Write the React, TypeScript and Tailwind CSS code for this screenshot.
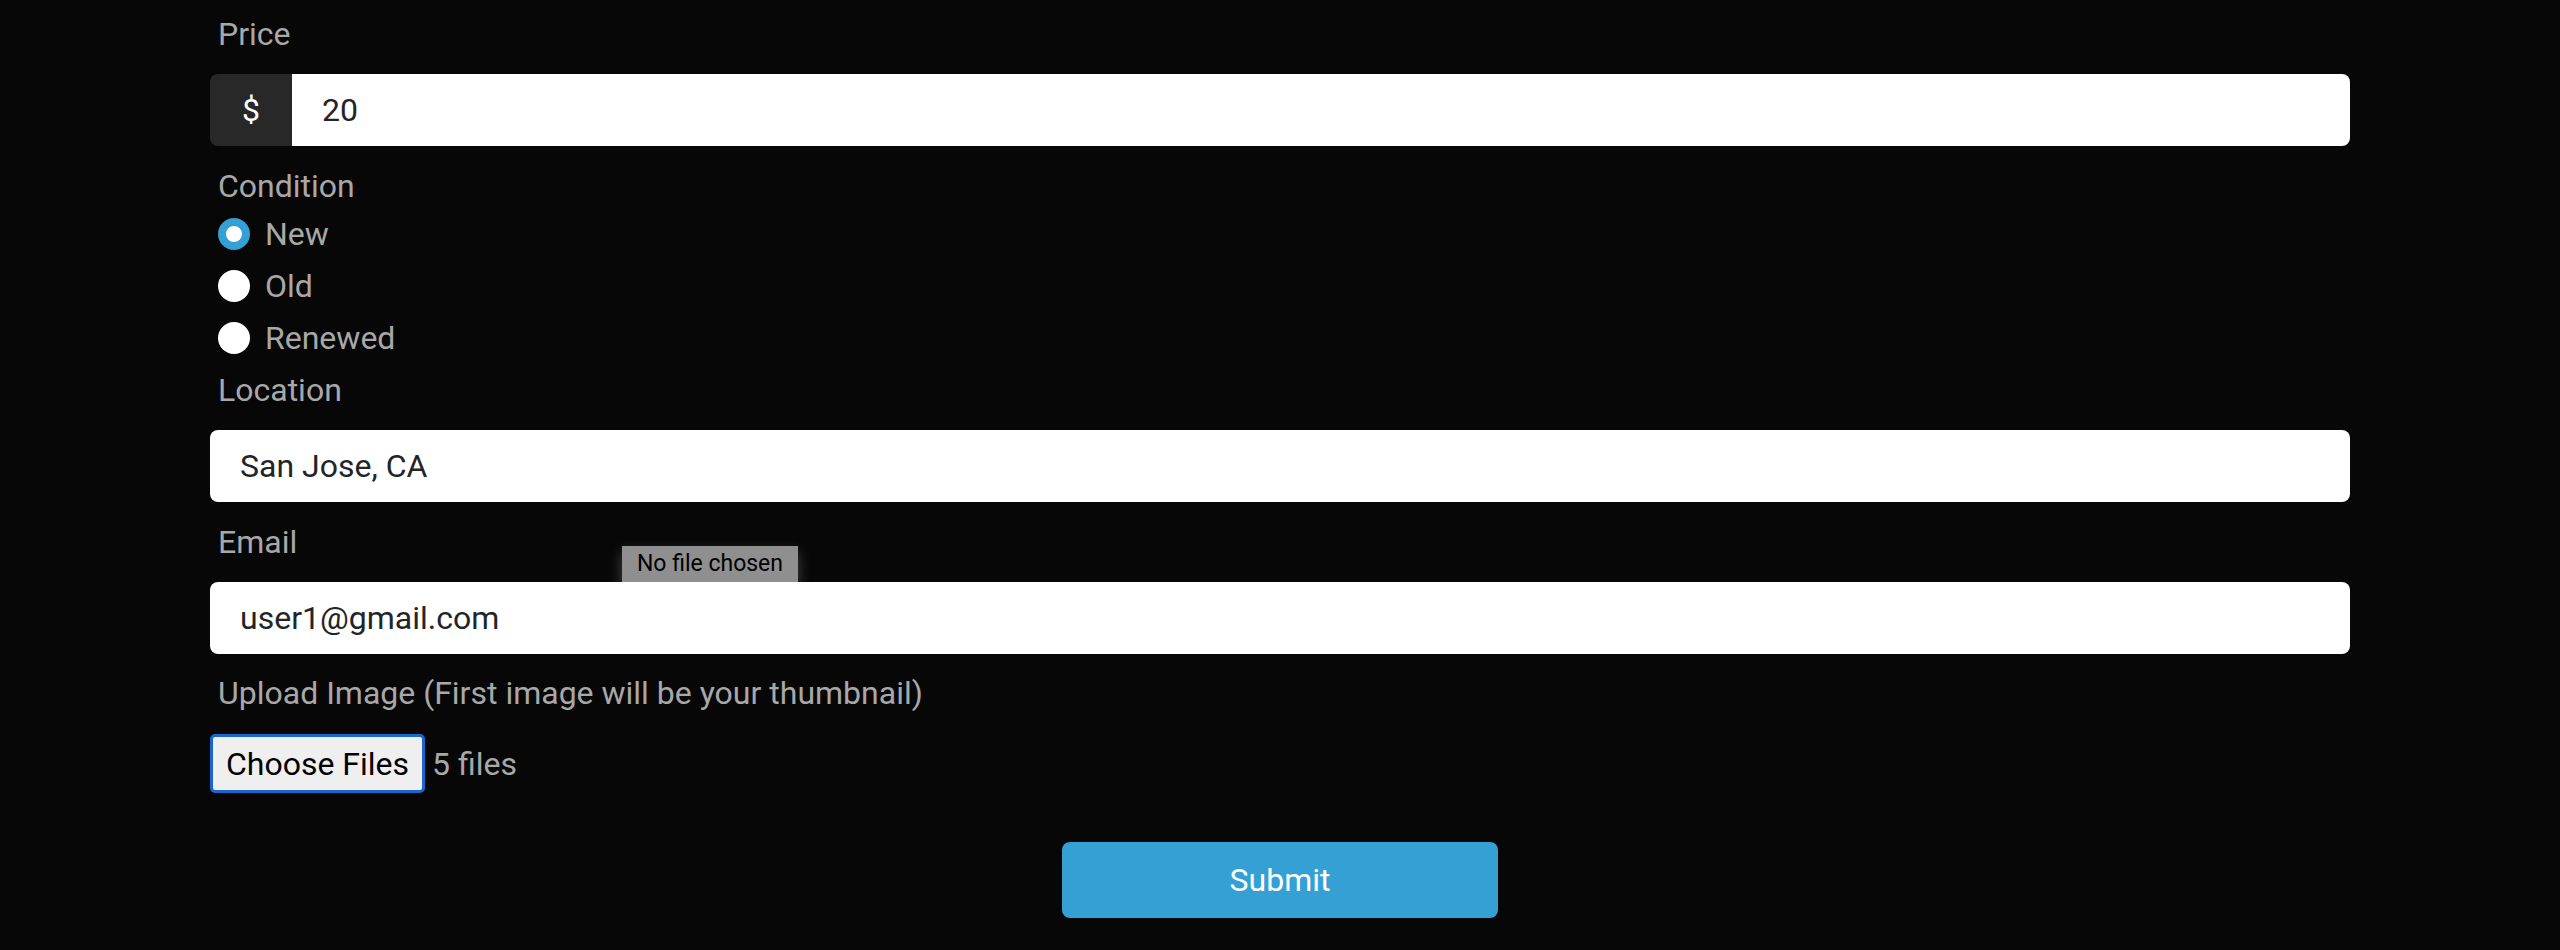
import React from 'react';

const font = { fontFamily: 'Roboto, "Noto Sans", sans-serif' };

function Label({ children, className = '' }: { children: React.ReactNode; className?: string }) {
    return (
        <label className={`block pl-[8px] text-[32px] leading-[48px] text-[#a8a8a8] ${className}`}>{children}</label>
    );
}

function Radio({ label, checked }: { label: string; checked?: boolean }) {
    return (
        <div className="flex items-center h-[48px] mb-[4px] pl-[8px]">
            {checked ? (
                <span className="w-[32px] h-[32px] rounded-full border-[8px] border-[#33a0d6] bg-white" />
            ) : (
                <span className="w-[32px] h-[32px] rounded-full bg-white" />
            )}
            <span className="ml-[15px] text-[32px] leading-[48px] text-[#a8a8a8]">{label}</span>
        </div>
    );
}

export default function App() {
    return (
        <div className="min-h-[950px] w-full bg-[#070707]" style={font}>
            <div className="relative mx-auto w-[2140px] pt-[10px]">
                {/* --- PRICE --- */}
                <Label className="mb-[16px]">Price</Label>
                <div className="flex h-[72px]">
                    <div className="w-[82px] flex items-center justify-center bg-[#282828] rounded-l-[8px] text-white text-[32px]">$</div>
                    <div className="flex-1 flex items-center bg-white rounded-r-[8px] pl-[30px] text-[32px] text-[#212529]">20</div>
                </div>

                {/* --- CONDITION --- */}
                <Label className="mt-[16px]">Condition</Label>
                <Radio label="New" checked />
                <Radio label="Old" />
                <Radio label="Renewed" />

                {/* --- LOCATION / EMAIL --- */}
                <Label className="mb-[16px]">Location</Label>
                <div className="h-[72px] flex items-center bg-white rounded-[8px] pl-[30px] text-[32px] text-[#212529]">San Jose, CA</div>

                <Label className="mt-[16px] mb-[16px]">Email</Label>
                <div className="h-[72px] flex items-center bg-white rounded-[8px] pl-[30px] text-[32px] text-[#212529]">user1@gmail.com</div>

                {/* --- UPLOAD --- */}
                <Label className="mt-[15px]">Upload Image (First image will be your thumbnail)</Label>
                <div className="flex items-center mt-[17px]">
                    <button className="h-[59px] w-[215px] flex items-center justify-center border-[3px] border-[#1766d1] rounded-[5px] bg-[#efefef] text-black text-[32px]">
                        Choose Files
                    </button>
                    <span className="ml-[7px] text-[32px] text-[#a8a8a8]">5 files</span>
                </div>

                <div className="flex justify-center mt-[49px]">
                    <button className="w-[436px] h-[76px] rounded-[8px] bg-[#35a0d4] text-white text-[32px]">
                        Submit
                    </button>
                </div>

                {/* tooltip over the email field */}
                <div className="absolute left-[412px] top-[546px] w-[176px] h-[36px] flex items-center justify-center bg-[#8f8f8f] text-black text-[23px] shadow-[0_6px_14px_rgba(255,255,255,0.25)]">
                    No file chosen
                </div>
            </div>
        </div>
    );
}
